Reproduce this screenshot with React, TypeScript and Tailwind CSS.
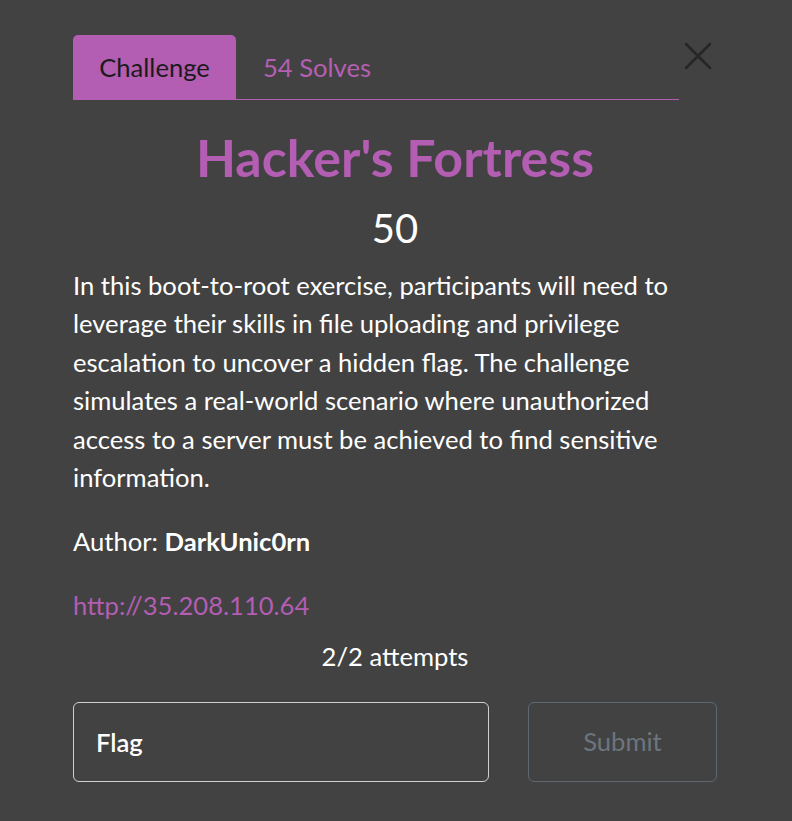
export default function App() {
  return (
    <div className="min-h-screen w-full bg-[#424242] font-['Lato','Noto_Sans',sans-serif] text-white">
      <div className="relative w-[644px] ml-[73px] pt-[35px]">
        {/* Tabs */}
        <div className="flex items-end w-[606px]">
          <div className="h-[64px] w-[163px] flex items-center justify-center rounded-t-[5px] bg-[#b35db3] text-[25.6px] text-[#1b1b1b]">
            Challenge
          </div>
          <div className="h-[64px] flex items-center pl-[27px] text-[25.6px] text-[#b55fb3]">
            54 Solves
          </div>
        </div>
        <div className="h-px w-[606px] bg-[#b55fb3]" />

        <button className="absolute top-[41px] left-[610px] text-[#262626]">
          <svg width="30" height="30" viewBox="0 0 30 30" fill="none" stroke="currentColor" strokeWidth="2.6" strokeLinecap="round">
            <path d="M3 3 L27 27 M27 3 L3 27" />
          </svg>
        </button>

        {/* Body */}
        <h1 className="mt-[26px] text-center text-[52px] leading-[62px] font-bold text-[#b35db3]">
          Hacker's Fortress
        </h1>
        <div className="mt-[16px] text-center text-[40px] leading-[48px]">50</div>

        <p className="mt-[14px] text-[25.6px] leading-[38.4px]">
          In this boot-to-root exercise, participants will need to leverage their skills in file
          uploading and privilege escalation to uncover a hidden flag. The challenge simulates a
          real-world scenario where unauthorized access to a server must be achieved to find
          sensitive information.
        </p>

        <p className="mt-[26px] text-[25.6px] leading-[38.4px]">
          Author: <span className="font-bold">DarkUnic0rn</span>
        </p>

        <p className="mt-[25px] text-[25.6px] leading-[38.4px] text-[#b35db3]">http://35.208.110.64</p>

        <p className="mt-[13px] text-center text-[25.6px] leading-[38.4px]">2/2 attempts</p>

        <div className="mt-[26px] flex gap-[39px]">
          <input
            className="h-[80px] w-[416px] rounded-[6px] border border-[#d0d0d0] bg-transparent px-[22px] text-[25.6px] font-semibold text-white outline-none placeholder:text-white"
            placeholder="Flag"
          />
          <button className="h-[80px] w-[189px] rounded-[6px] border border-[#5f6871] text-[25.6px] text-[#6c757d]">
            Submit
          </button>
        </div>
      </div>
    </div>
  );
}
